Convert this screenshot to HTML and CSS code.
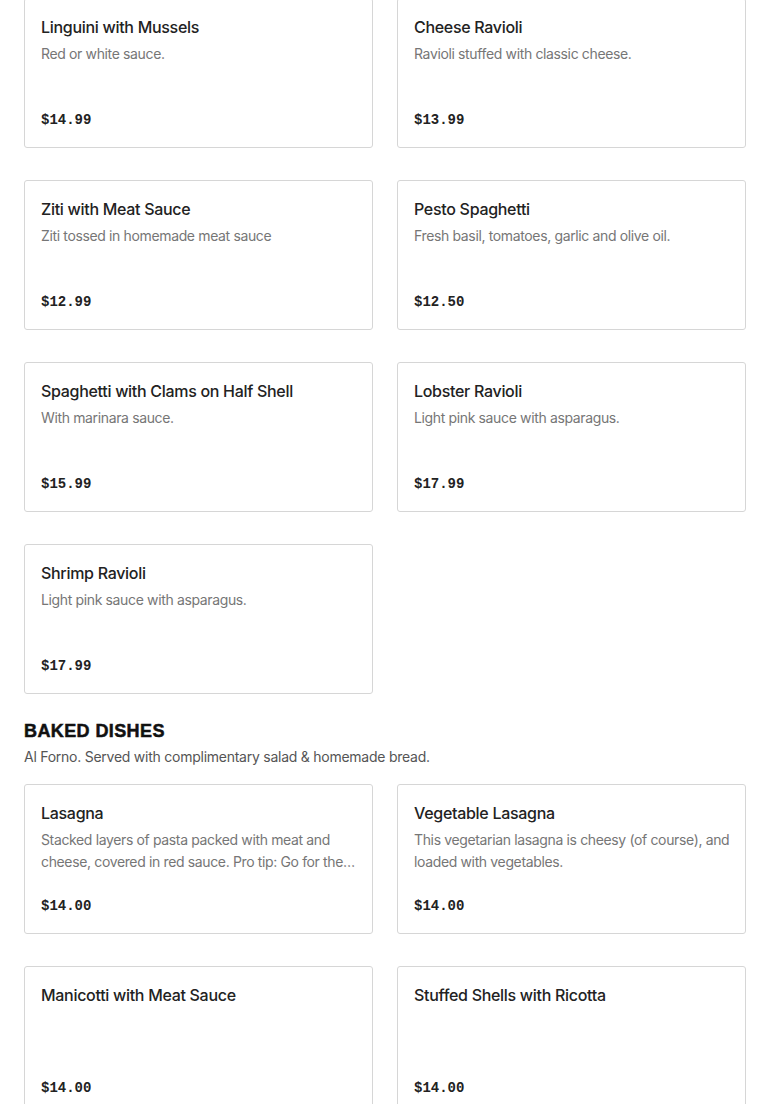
FILE: index.html
```html
<!DOCTYPE html>
<html lang="en">
<head>
<meta charset="utf-8">
<title>Menu</title>
<link rel="stylesheet" href="styles.css">
</head>
<body>
<main class="menu">
  <section class="section">
    <div class="grid">
      <article class="card"><h3 class="name">Linguini with Mussels</h3><p class="desc">Red or white sauce.</p><span class="price">$14.99</span></article>
      <article class="card"><h3 class="name">Cheese Ravioli</h3><p class="desc">Ravioli stuffed with classic cheese.</p><span class="price">$13.99</span></article>
      <article class="card"><h3 class="name">Ziti with Meat Sauce</h3><p class="desc">Ziti tossed in homemade meat sauce</p><span class="price">$12.99</span></article>
      <article class="card"><h3 class="name">Pesto Spaghetti</h3><p class="desc">Fresh basil, tomatoes, garlic and olive oil.</p><span class="price">$12.50</span></article>
      <article class="card"><h3 class="name">Spaghetti with Clams on Half Shell</h3><p class="desc">With marinara sauce.</p><span class="price">$15.99</span></article>
      <article class="card"><h3 class="name">Lobster Ravioli</h3><p class="desc">Light pink sauce with asparagus.</p><span class="price">$17.99</span></article>
      <article class="card"><h3 class="name">Shrimp Ravioli</h3><p class="desc">Light pink sauce with asparagus.</p><span class="price">$17.99</span></article>
    </div>
  </section>
  <section class="section">
    <h2 class="section-title">BAKED DISHES</h2>
    <p class="section-sub">Al Forno. Served with complimentary salad &amp; homemade bread.</p>
    <div class="grid">
      <article class="card"><h3 class="name">Lasagna</h3><p class="desc">Stacked layers of pasta packed with meat and cheese, covered in red sauce. Pro tip: Go for the meat lasagna if you want a hearty classic.</p><span class="price">$14.00</span></article>
      <article class="card"><h3 class="name">Vegetable Lasagna</h3><p class="desc">This vegetarian lasagna is cheesy (of course), and loaded with vegetables.</p><span class="price">$14.00</span></article>
      <article class="card"><h3 class="name">Manicotti with Meat Sauce</h3><p class="desc"></p><span class="price">$14.00</span></article>
      <article class="card"><h3 class="name">Stuffed Shells with Ricotta</h3><p class="desc"></p><span class="price">$14.00</span></article>
    </div>
  </section>
</main>
</body>
</html>
```
FILE: styles.css
```css
html, body {
  margin: 0;
  padding: 0;
  background: #ffffff;
}
body {
  font-family: "Inter", "Liberation Sans", sans-serif;
  color: #1f1f1f;
}
.menu {
  padding: 0 24px;
  margin-top: -2px;
}
.section {
  display: flex;
  flex-direction: column;
}
.section + .section {
  margin-top: 25px;
}
.section-title {
  margin: 0;
  font-family: "Liberation Sans", "Inter", sans-serif;
  font-weight: 900;
  font-size: 18px;
  line-height: 24px;
  letter-spacing: 0.4px;
  -webkit-text-stroke: 0.5px #111;
  color: #111;
}
.section-sub {
  margin: 3px 0 16px;
  font-size: 14px;
  line-height: 22px;
  letter-spacing: -0.25px;
  color: #555;
}
.grid {
  display: grid;
  grid-template-columns: 1fr 1fr;
  column-gap: 24px;
  row-gap: 32px;
}
.card {
  display: flex;
  flex-direction: column;
  border: 1px solid #d6d6d6;
  border-radius: 3px;
  padding: 16px;
  box-sizing: border-box;
  height: 150px;
}
.name {
  margin: 0;
  font-size: 16px;
  font-weight: 500;
  line-height: 24px;
  letter-spacing: -0.3px;
  color: #222;
}
.desc {
  margin: 4px -4px 0 0;
  font-size: 14px;
  line-height: 22px;
  letter-spacing: -0.36px;
  color: #767676;
  height: 44px;
  overflow: hidden;
  display: -webkit-box;
  -webkit-line-clamp: 2;
  -webkit-box-orient: vertical;
}
.price {
  margin-top: auto;
  margin-bottom: 1px;
  font-family: "Liberation Mono", monospace;
  font-weight: 700;
  font-size: 14px;
  line-height: 20px;
  color: #222;
}
```
